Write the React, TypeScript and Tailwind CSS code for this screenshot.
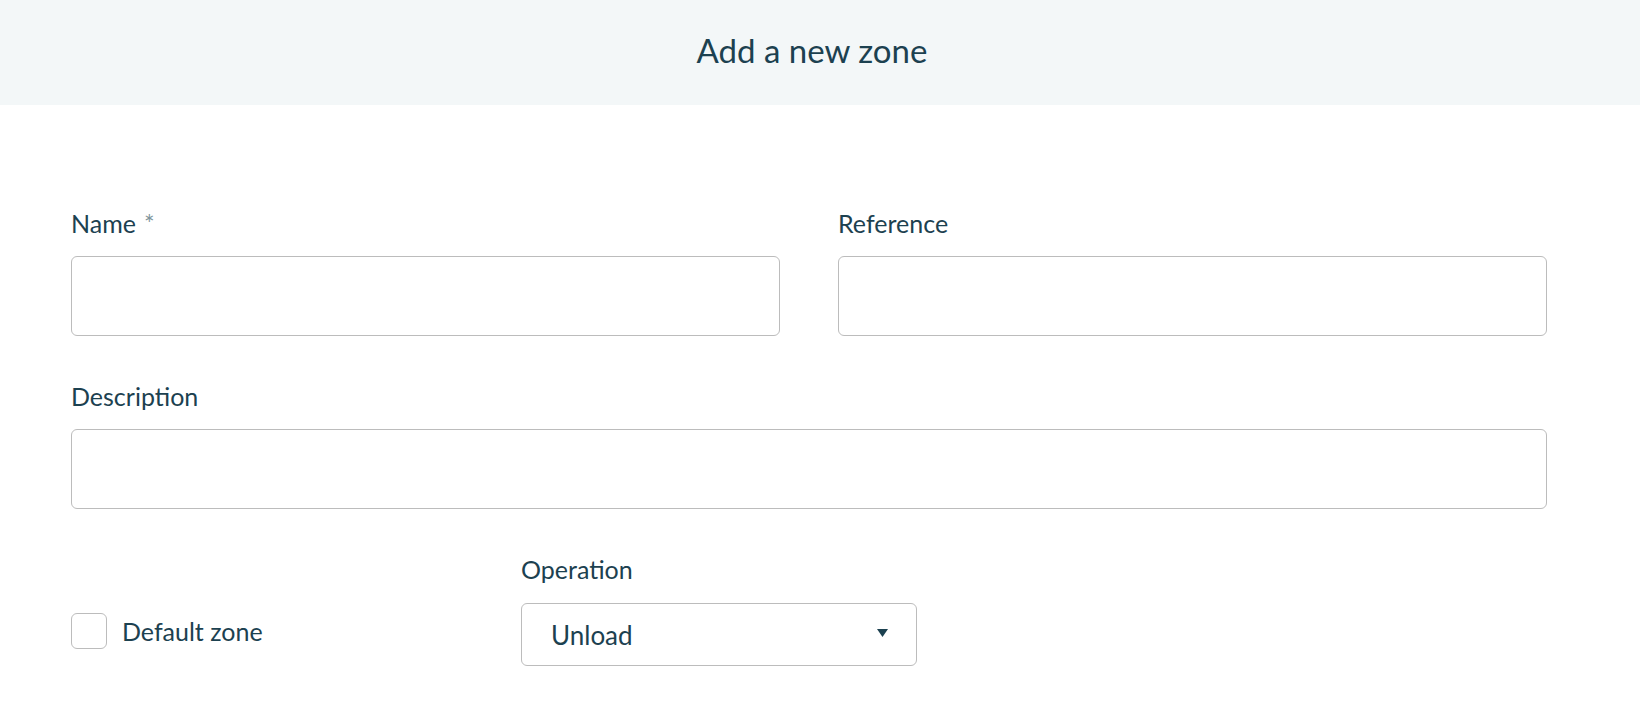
const font = { fontFamily: '"Lato", "Open Sans", sans-serif' };

function Field({ label, required, className }: { label: string; required?: boolean; className?: string }) {
  return (
    <div className={className}>
      <label className="block text-[25px] leading-[30px] text-[#1c4150]">
        {label}
        {required && <span className="ml-[8px] text-[25px] text-[#7f959c]">*</span>}
      </label>
      <input
        type="text"
        className="mt-[18px] block h-[80px] w-full rounded-[6px] border border-[#bcbcbc] bg-white px-4 text-[25px] text-[#1c4150] outline-none"
      />
    </div>
  );
}

export default function App() {
  return (
    <div className="min-h-screen bg-white text-[#1c4150]" style={font}>
      <header className="h-[105px] bg-[#f3f7f8] pt-[30px] pr-[16px] text-center">
        <h1 className="text-[33px] leading-[40px] text-[#1c4150]">Add a new zone</h1>
      </header>

      <form className="pl-[71px] pr-[93px] pt-[103px]">
        <div className="grid grid-cols-2 gap-x-[58px]">
          <Field label="Name" required />
          <Field label="Reference" />
        </div>

        <Field label="Description" className="mt-[45px]" />

        <div className="mt-[45px] flex items-end">
          <label className="mb-[17px] flex w-[450px] items-center gap-[15px]">
            <span className="block h-[36px] w-[36px] rounded-[6px] border border-[#bcbcbc] bg-white" />
            <span className="text-[25px] leading-[30px]">Default zone</span>
          </label>
          <div>
            <div className="text-[25px] leading-[30px]">Operation</div>
            <button
              type="button"
              className="mt-[19px] flex h-[63px] w-[396px] items-center justify-between rounded-[6px] border border-[#bcbcbc] bg-white pl-[29px] pr-[28px]"
            >
              <span className="text-[26px] leading-[30px]">Unload</span>
              <svg width="11" height="8" viewBox="0 0 11 8" className="mt-[-4px]">
                <path d="M0 0h11L5.5 8z" fill="#1c4150" />
              </svg>
            </button>
          </div>
        </div>
      </form>
    </div>
  );
}
